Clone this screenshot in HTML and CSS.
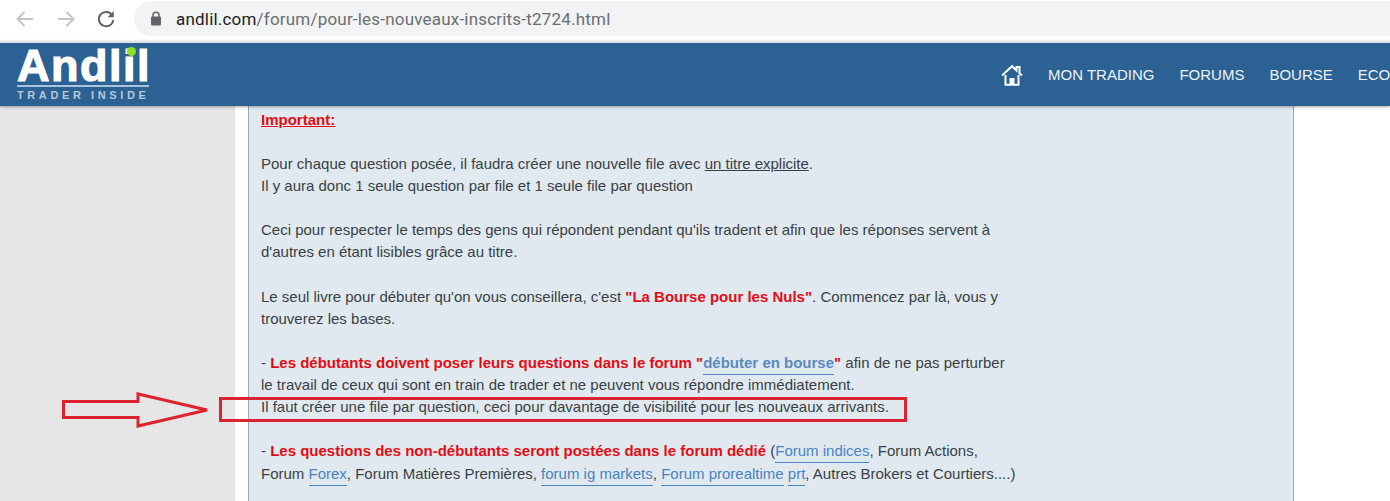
FILE: index.html
```html
<!DOCTYPE html>
<html lang="fr">
<head>
  <meta charset="UTF-8" />
  <meta name="viewport" content="width=device-width, initial-scale=1.0"/>
  <title>Pour les nouveaux inscrits</title>
  <link rel="stylesheet" href="styles.css">
</head>
<body>
  <div class="browser-bar">
    <svg class="nav-icon" width="24" height="24" viewBox="0 0 24 24"><path d="M20 12H5M11.500 5L4.500 12l7 7" fill="none" stroke="#c2c4c6" stroke-width="2"/></svg>
    <svg class="nav-icon" width="24" height="24" viewBox="0 0 24 24"><path d="M4 12h15M12.500 5l7 7-7 7" fill="none" stroke="#c2c4c6" stroke-width="2"/></svg>
    <svg class="nav-icon" width="24" height="24" viewBox="0 0 24 24"><path d="M18.200 8.200A7.200 7.200 0 1 0 19.300 13" fill="none" stroke="#5f6368" stroke-width="2"/><path d="M19.800 4v6.200h-6.200z" fill="#5f6368"/></svg>
    <div class="url-pill">
      <svg width="12" height="15" viewBox="0 0 12 15"><path d="M3 6V4.200a3 3 0 0 1 6 0V6" fill="none" stroke="#5f6368" stroke-width="1.500"/><rect x="1" y="5.500" width="10" height="9" rx="1" fill="#5f6368"/></svg>
      <span class="url-text"><span class="url-host">andlil.com</span>/forum/pour-les-nouveaux-inscrits-t2724.html</span>
    </div>
  </div>

  <header class="site-header">
    <div class="logo">
      <div class="logo-name">Andlil<span class="logo-dot"></span></div>
      <div class="logo-tag">TRADER INSIDE</div>
    </div>
    <nav class="main-nav">
      <svg width="22" height="22" viewBox="0 0 22 22"><path d="M1 11.500L11 2.200l4.500 4.200V3h3v6.200l2.500 2.300" fill="none" stroke="#fff" stroke-width="2"/><path d="M4.500 11v9.800h13V11" fill="none" stroke="#fff" stroke-width="2"/><rect x="8.500" y="14" width="5" height="6" fill="#fff"/></svg>
      <a href="#">MON TRADING</a>
      <a href="#">FORUMS</a>
      <a href="#">BOURSE</a>
      <a href="#">ECONOMIE</a>
    </nav>
  </header>

  <main class="page">
    <aside class="sidebar"></aside>
    <div class="gutter"></div>
    <article class="post">
      <p><a class="important" href="#">Important:</a></p>
      <p>Pour chaque question posée, il faudra créer une nouvelle file avec <span class="plain-link">un titre explicite</span>.<br>
      Il y aura donc 1 seule question par file et 1 seule file par question</p>
      <p>Ceci pour respecter le temps des gens qui répondent pendant qu'ils tradent et afin que les réponses servent à<br>
      d'autres en étant lisibles grâce au titre.</p>
      <p>Le seul livre pour débuter qu'on vous conseillera, c'est <b>"La Bourse pour les Nuls"</b>. Commencez par là, vous y<br>
      trouverez les bases.</p>
      <p>- <b>Les débutants doivent poser leurs questions dans le forum "<a class="bold-link" href="#">débuter en bourse</a>"</b> afin de ne pas perturber<br>
      le travail de ceux qui sont en train de trader et ne peuvent vous répondre immédiatement.<br>
      Il faut créer une file par question, ceci pour davantage de visibilité pour les nouveaux arrivants.</p>
      <p>- <b>Les questions des non-débutants seront postées dans le forum dédié</b> (<a href="#">Forum indices</a>, Forum Actions,<br>
      Forum <a href="#">Forex</a>, Forum Matières Premières, <a href="#">forum ig markets</a>, <a href="#">Forum prorealtime</a> <a href="#">prt</a>, Autres Brokers et Courtiers....)</p>
    </article>
    <div class="right-side"></div>

    <!-- annotation drawn over the page -->
    <svg class="arrow" width="152" height="36" viewBox="0 0 152 36"><path d="M1.500 9.500H76V2l69 16-69 16v-8.500H1.500z" fill="none" stroke="#dc2430" stroke-width="3"/></svg>
    <div class="highlight-box"></div>
  </main>
</body>
</html>
```

FILE: styles.css
```css
html, body {
  height: 100%;
}
body {
  font-family: "Liberation Sans", Arial, sans-serif;
  margin: 0;
  background: white;
  overflow: hidden;
}
.browser-bar {
  height: 41px;
  display: flex;
  align-items: flex-start;
  background: white;
  padding-left: 13px;
  box-sizing: border-box;
}
.nav-icon {
  margin-top: 7px;
  margin-right: 17px;
}
.nav-icon:nth-child(3) {
  margin-left: -1px;
  margin-right: 16px;
}
.url-pill {
  flex: 1;
  height: 35px;
  margin-top: 1px;
  display: flex;
  align-items: center;
  gap: 14px;
  padding-left: 16px;
  background: #f1f3f4;
  border-radius: 18px 0 0 18px;
}
.url-text {
  font-family: Roboto, sans-serif;
  font-size: 17px;
  letter-spacing: 0.2px;
  color: #6b6e72;
}
.url-host {
  color: #202124;
}
.site-header {
  height: 63px;
  border-top: 2px solid #dee1e6;
  display: flex;
  align-items: center;
  background: #2b6193;
  box-shadow: 0 1px 3px rgba(0, 0, 0, 0.35);
  position: relative;
  z-index: 2;
  overflow: hidden;
}
.logo {
  margin-left: 17px;
  width: 138px;
  flex-shrink: 0;
  align-self: flex-start;
  padding-top: 5px;
  color: white;
}
.logo-name {
  position: relative;
  font-weight: bold;
  font-size: 45px;
  line-height: 36px;
  letter-spacing: 1.5px;
  height: 37px;
  -webkit-text-stroke: 1.2px white;
  white-space: nowrap;
}
.logo-dot {
  position: absolute;
  left: 110px;
  top: -1px;
  width: 9px;
  height: 9px;
  border-radius: 50%;
  background: #8fe020;
}
.logo-tag {
  width: 132px;
  border-top: 2px solid #a9c4dd;
  padding-top: 2px;
  font-size: 11px;
  font-weight: bold;
  line-height: 12px;
  letter-spacing: 3.6px;
  color: #b5c9dc;
  white-space: nowrap;
}
.main-nav {
  display: flex;
  align-items: center;
  gap: 25px;
  flex-shrink: 0;
  margin-left: 846px;
}
.main-nav a {
  color: #eef3f7;
  font-size: 15px;
  text-decoration: none;
}
.page {
  position: relative;
  height: 395px;
  display: flex;
  overflow: hidden;
}
.sidebar {
  width: 235px;
  background: #e6e6e6;
}
.gutter {
  width: 13px;
}
.post {
  width: 1032px;
  padding: 2.6px 0 0 12px;
  background: #e0e9f0;
  border-left: 1px solid #a3a8ad;
  border-right: 1px solid #a3a8ad;
  font-size: 15px;
  line-height: 22.13px;
  color: #3a3f44;
}
.post p {
  margin: 0 0 22.13px;
  white-space: nowrap;
}
.post b {
  color: #e60b12;
}
.post a {
  color: #4a82c0;
  text-decoration: none;
  border-bottom: 1px solid #4a82c0;
  padding-bottom: 3px;
}
.post a.important {
  color: #e60b12;
  font-weight: bold;
  text-decoration: underline;
  border-bottom: none;
  padding-bottom: 0;
}
.post a.bold-link {
  color: #5b8abd;
}
.plain-link {
  text-decoration: underline;
}
.right-side {
  flex: 1;
}
.arrow {
  position: absolute;
  left: 62px;
  top: 286px;
}
.highlight-box {
  position: absolute;
  left: 219px;
  top: 291px;
  width: 688px;
  height: 25px;
  box-sizing: border-box;
  border: 3px solid #dc2430;
}
```
